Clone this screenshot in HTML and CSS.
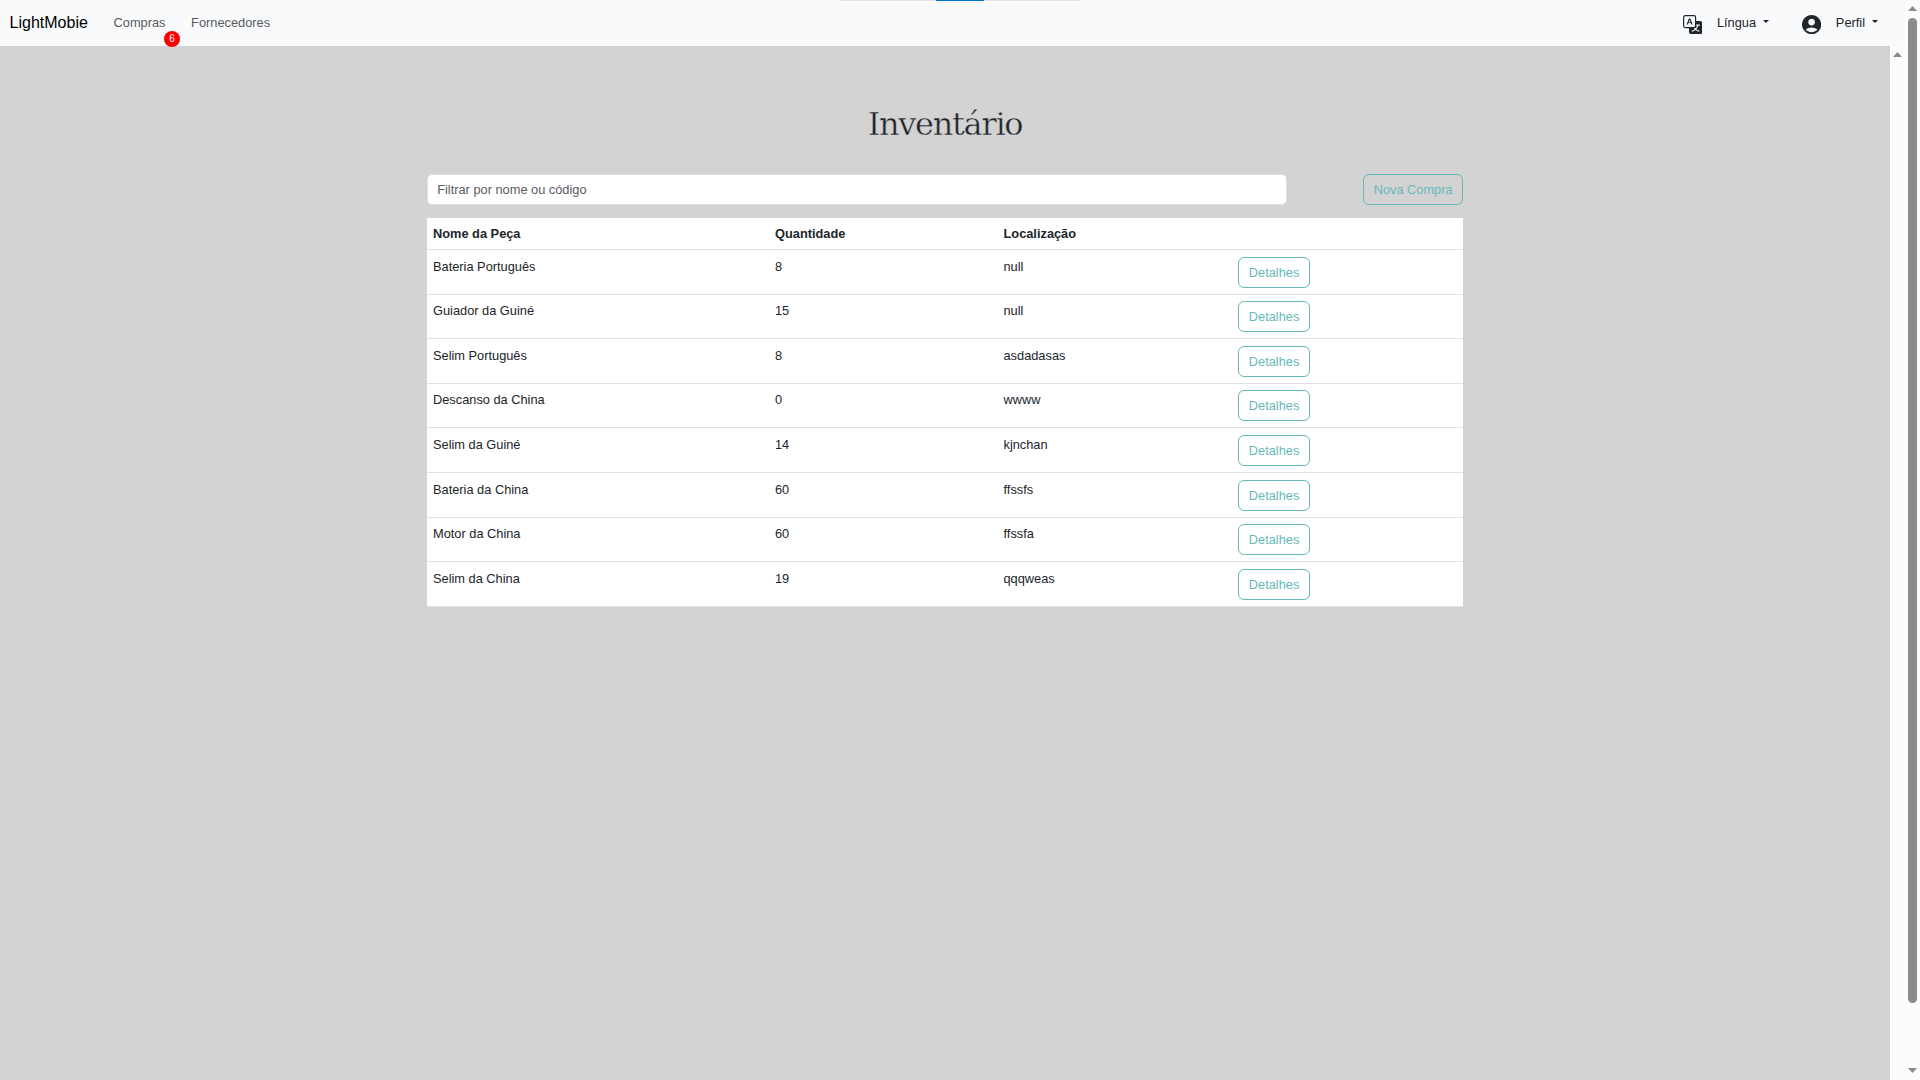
FILE: index.html
```html
<!DOCTYPE html>
<html lang="pt">
<head>
<meta charset="utf-8">
<title>LightMobie</title>
<link rel="stylesheet" href="styles.css">
</head>
<body>
<div class="app">
  <div class="shell">
    <nav class="navbar">
      <a class="brand">LightMobie</a>
      <a class="nav-link compras">Compras<span class="badge">6</span></a>
      <a class="nav-link">Fornecedores</a>
      <div class="nav-right">
        <svg class="icon-lang" viewBox="0 0 16 16"><path d="M4.545 6.714 4.11 8H3l1.862-5h1.284L8 8H6.833l-.435-1.286H4.545zm1.634-.736L5.5 3.956h-.049l-.679 2.022H6.18z"/><path d="M0 2a2 2 0 0 1 2-2h7a2 2 0 0 1 2 2v3h3a2 2 0 0 1 2 2v7a2 2 0 0 1-2 2H7a2 2 0 0 1-2-2v-3H2a2 2 0 0 1-2-2V2zm2-1a1 1 0 0 0-1 1v7a1 1 0 0 0 1 1h7a1 1 0 0 0 1-1V2a1 1 0 0 0-1-1H2zm7.138 9.995c.193.301.402.583.63.846-.748.575-1.673 1.001-2.768 1.292.178.217.451.635.555.867 1.125-.359 2.08-.844 2.886-1.494.777.665 1.739 1.165 2.93 1.472.133-.254.414-.673.629-.89-1.125-.253-2.057-.694-2.82-1.284.681-.747 1.222-1.651 1.621-2.757H14V8h-3v1.047h.765c-.318.844-.74 1.546-1.272 2.13a6.066 6.066 0 0 1-.415-.492 1.988 1.988 0 0 1-.94.31z"/></svg>
        <a class="dropdown lang">Língua</a>
        <svg class="icon-user" viewBox="2 2 20 20"><path d="M12 2C6.48 2 2 6.48 2 12s4.48 10 10 10 10-4.48 10-10S17.52 2 12 2zm0 4c1.93 0 3.5 1.57 3.5 3.5S13.93 13 12 13s-3.5-1.57-3.5-3.5S10.07 6 12 6zm0 14c-2.03 0-4.43-.82-6.14-2.88C7.55 15.8 9.68 15 12 15s4.45.8 6.14 2.12C16.43 19.18 14.03 20 12 20z"/></svg>
        <a class="dropdown">Perfil</a>
      </div>
      <div class="handle"></div>
    </nav>
    <div class="body-row">
      <main class="content">
        <h1 class="title">Inventário</h1>
        <div class="toolbar">
          <input class="filter" type="text" placeholder="Filtrar por nome ou código">
          <button class="btn">Nova Compra</button>
        </div>
        <table class="table">
          <colgroup><col class="c-name"><col class="c-qty"><col class="c-loc"><col></colgroup>
          <thead><tr><th>Nome da Peça</th><th>Quantidade</th><th>Localização</th><th></th></tr></thead>
          <tbody>
            <tr><td>Bateria Português</td><td>8</td><td>null</td><td><button class="btn">Detalhes</button></td></tr>
            <tr><td>Guiador da Guiné</td><td>15</td><td>null</td><td><button class="btn">Detalhes</button></td></tr>
            <tr><td>Selim Português</td><td>8</td><td>asdadasas</td><td><button class="btn">Detalhes</button></td></tr>
            <tr><td>Descanso da China</td><td>0</td><td>wwww</td><td><button class="btn">Detalhes</button></td></tr>
            <tr><td>Selim da Guiné</td><td>14</td><td>kjnchan</td><td><button class="btn">Detalhes</button></td></tr>
            <tr><td>Bateria da China</td><td>60</td><td>ffssfs</td><td><button class="btn">Detalhes</button></td></tr>
            <tr><td>Motor da China</td><td>60</td><td>ffssfa</td><td><button class="btn">Detalhes</button></td></tr>
            <tr><td>Selim da China</td><td>19</td><td>qqqweas</td><td><button class="btn">Detalhes</button></td></tr>
          </tbody>
        </table>
      </main>
      <div class="inner-scroll"><svg viewBox="0 0 9 5"><path d="M4.5 0 9 5H0z"/></svg></div>
    </div>
  </div>
  <div class="outer-scroll">
    <svg viewBox="0 0 9 5"><path d="M4.5 0 9 5H0z"/></svg>
    <div class="thumb"></div>
    <svg viewBox="0 0 9 5"><path d="M0 0h9L4.5 5z"/></svg>
  </div>
</div>
</body>
</html>
```
FILE: styles.css
```css
* { box-sizing: border-box; }
body {
  margin: 0;
  height: 1080px;
  overflow: hidden;
  font: 12.8px/19.2px "Liberation Sans", Arial, sans-serif;
  color: #212529;
  background: #fcfcfc;
}
.app { display: flex; height: 1080px; }
.shell { flex: 1; display: flex; flex-direction: column; }
.navbar {
  position: relative;
  display: flex;
  align-items: center;
  height: 46px;
  padding: 0 27px 0 9.6px;
  background: #f8fafc;
}
.brand { width: 104px; font-size: 16px; line-height: 24px; color: #000; }
.nav-link { position: relative; color: #595b5d; margin-right: 25.6px; }
.badge {
  position: absolute;
  left: 50.4px;
  top: 18px;
  width: 16px;
  height: 16px;
  border-radius: 50%;
  background: #f00;
  color: #fff;
  font-size: 10px;
  line-height: 16px;
  text-align: center;
}
.nav-right { display: flex; align-items: center; margin-left: auto; }
.nav-right svg { fill: #212529; margin-top: 3px; }
.icon-lang { width: 19.2px; height: 19.2px; margin-right: 14.6px; }
.icon-user { width: 19.2px; height: 19.2px; margin-right: 14.6px; }
.dropdown { display: flex; align-items: center; }
.dropdown::after {
  content: "";
  margin: -2px 0 0 7px;
  border: 3.5px solid transparent;
  border-top-color: #212529;
  border-bottom: 0;
}
.lang { margin-right: 33px; }
.handle {
  position: absolute;
  left: 840px;
  top: 0;
  width: 241px;
  height: 1px;
  background: linear-gradient(to right, #e3e4e6 96px, #0078d4 96px, #0078d4 144px, #e3e4e6 144px);
}
.body-row { flex: 1; display: flex; }
.content { width: 1890px; padding: 0 427px; background: #d3d3d3; }
.inner-scroll { width: 15px; padding: 6px 0 0 3px; }
.inner-scroll svg, .outer-scroll svg { display: block; width: 9px; height: 5px; fill: #8b8b8b; }
.outer-scroll {
  display: flex;
  flex-direction: column;
  width: 15px;
  padding: 6px 0 7px 3px;
}
.thumb { width: 9px; height: 985px; margin: 7px 0 auto; border-radius: 5px; background: #8b8b8b; }
.title {
  margin: 58px 0 30px;
  font: 400 32px/40px "Roboto Slab", "DejaVu Serif", serif;
  text-align: center;
  letter-spacing: -1.3px;
  -webkit-text-stroke: 0.45px #d3d3d3;
}
.toolbar { display: flex; justify-content: space-between; margin-bottom: 13px; }
.filter {
  width: 860px;
  height: 31px;
  padding: 0 9.2px;
  border: 1px solid #dee2e6;
  border-radius: 5px;
  font: inherit;
}
.filter::placeholder { color: #595c5f; }
.btn {
  display: block;
  height: 31px;
  padding: 0 9.4px;
  border: 1px solid #66b9b9;
  border-radius: 6px;
  background: transparent;
  color: #66b9b9;
  font: inherit;
}
.table {
  width: 1036px;
  table-layout: fixed;
  border-collapse: separate;
  border-spacing: 0;
  background: #fff;
}
.c-name { width: 342px; }
.c-qty { width: 228.5px; }
.c-loc { width: 234.5px; }
th, td { padding: 6.7px 6px 5.9px; text-align: left; vertical-align: top; border-bottom: 1px solid #dee2e6; }
th { height: 32px; padding: 6px 6px 5px; }
td { height: 44.6px; }
td:last-child { padding-left: 6.4px; }
```
